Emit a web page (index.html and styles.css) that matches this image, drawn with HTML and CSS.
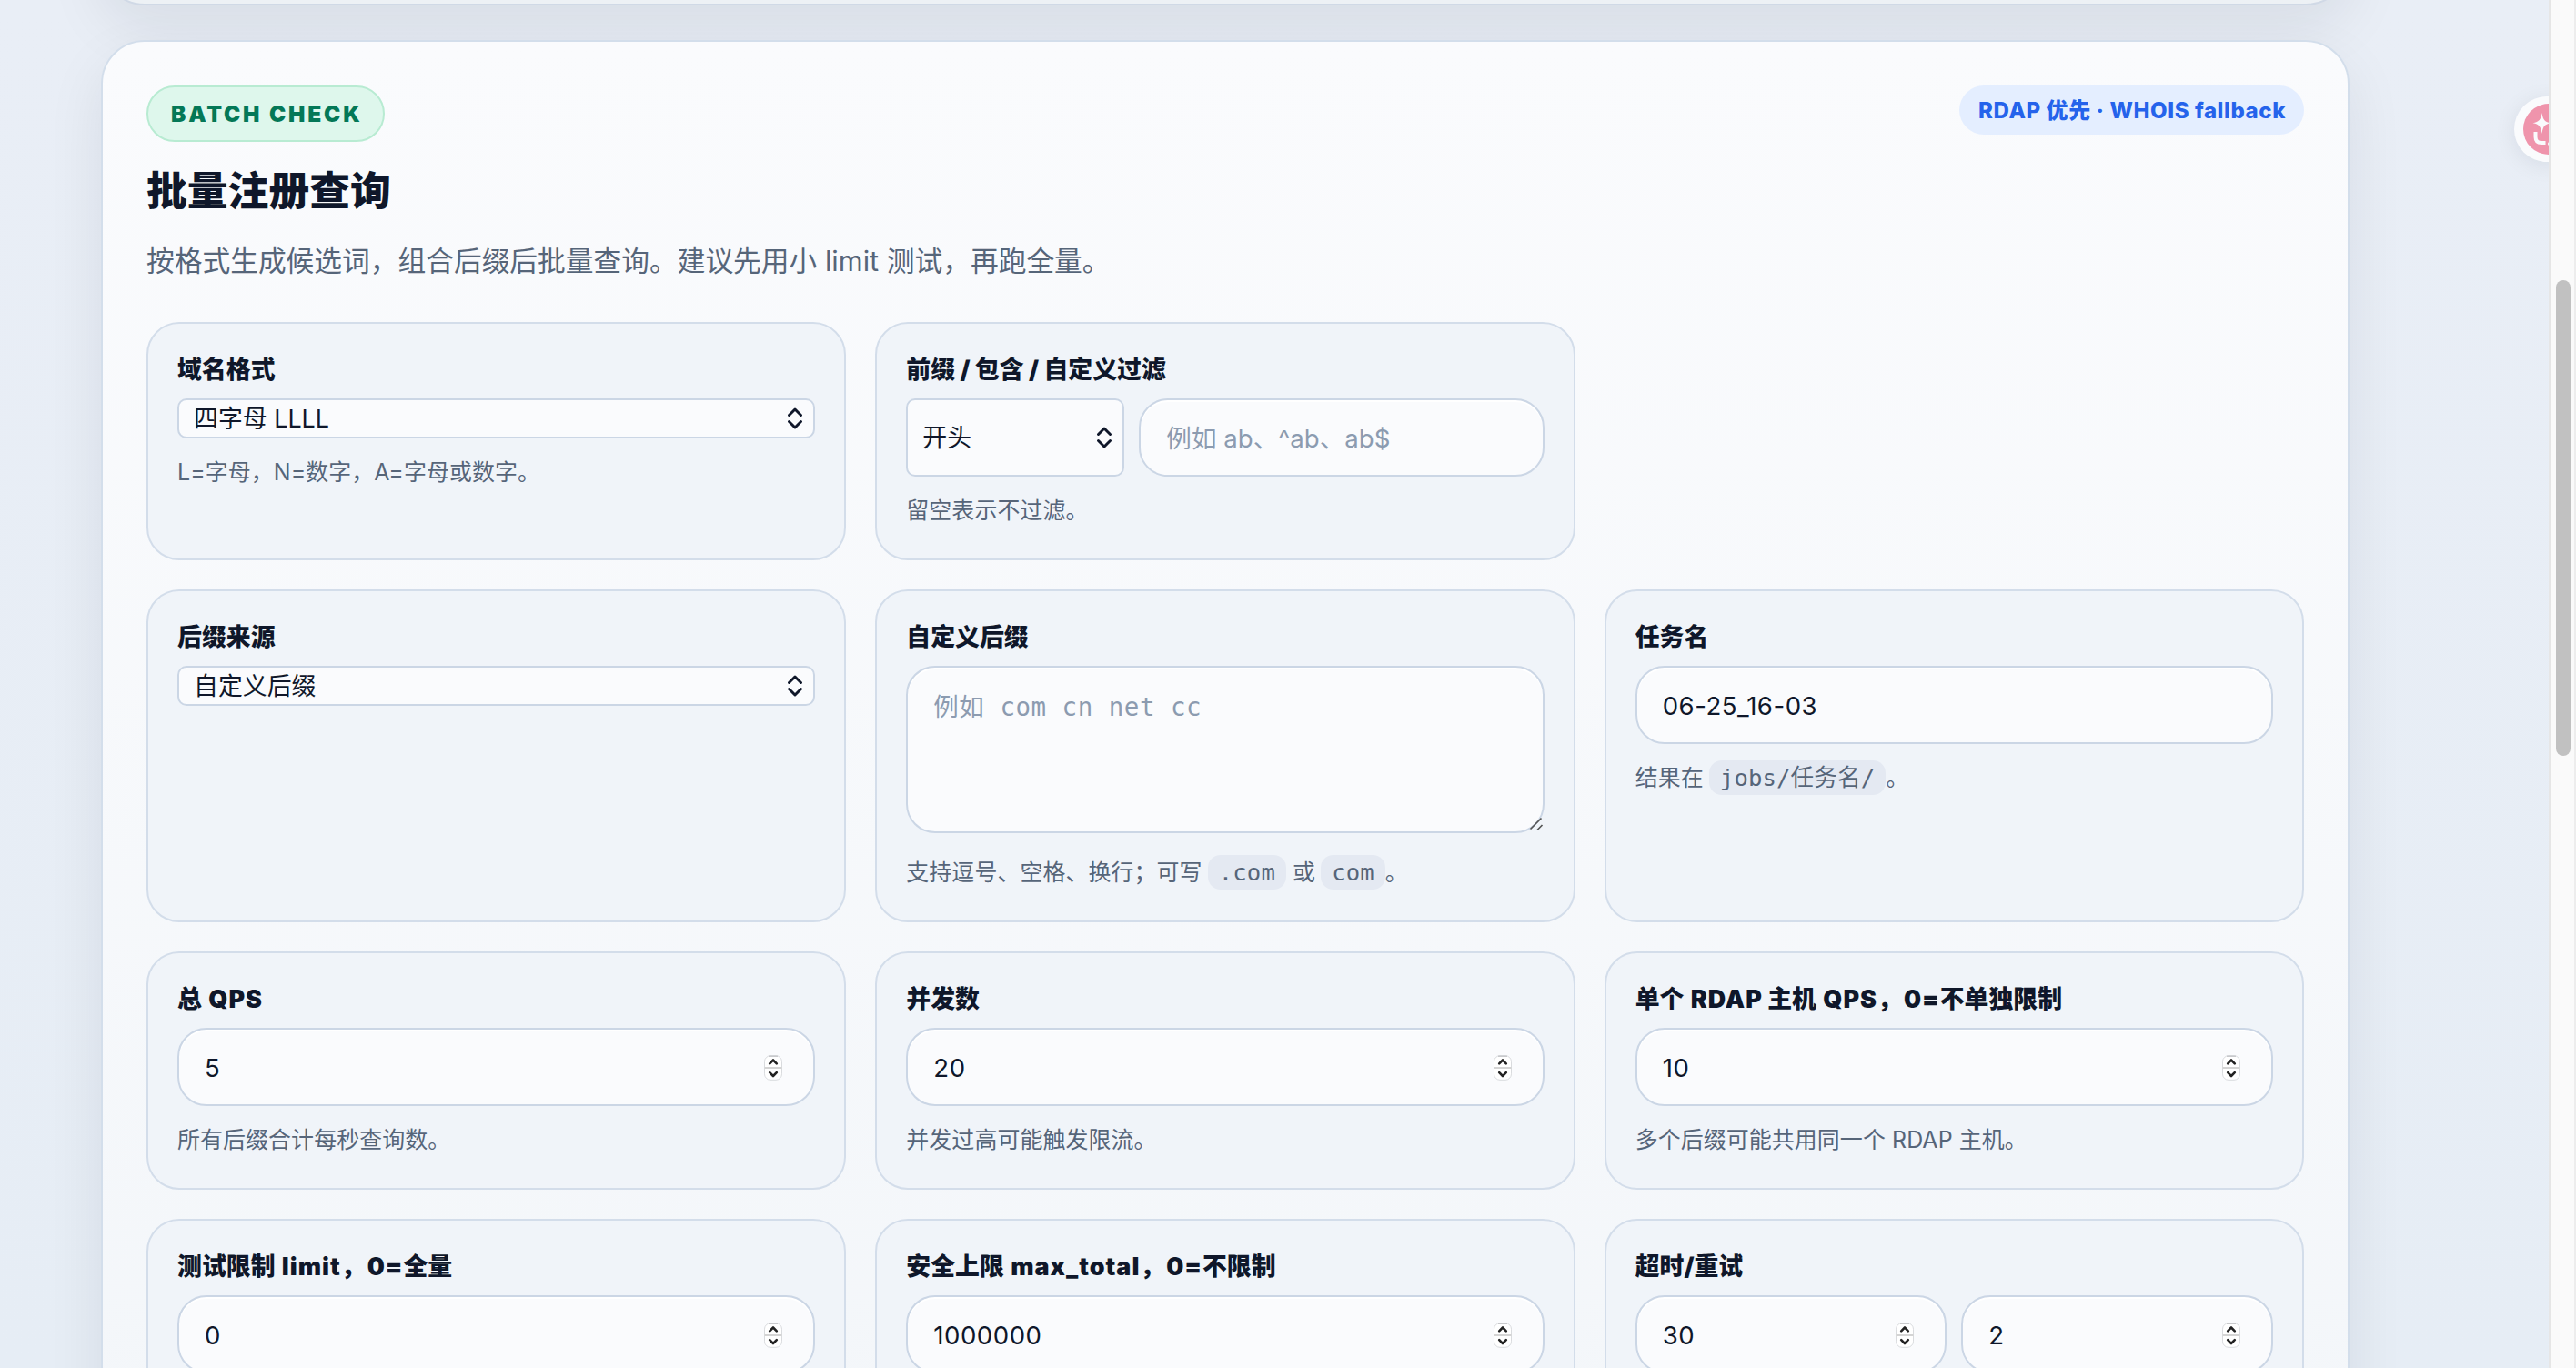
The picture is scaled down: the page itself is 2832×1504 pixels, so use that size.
FILE: index.html
```html
<!DOCTYPE html>
<html lang="zh-CN">
<head>
<meta charset="utf-8">
<title>批量注册查询</title>
<link rel="stylesheet" href="styles.css">
</head>
<body>
<svg class="defs" width="0" height="0" aria-hidden="true">
  <symbol id="chev" viewBox="0 0 18 24"><path d="M2.500 8.500 9 2l6.500 6.500M2.500 15.500 9 22l6.500-6.500" fill="none" stroke="#0f172a" stroke-width="2.900" stroke-linecap="round" stroke-linejoin="round"/></symbol>
  <symbol id="step" viewBox="0 0 20 28"><rect x=".5" y=".7" width="19" height="26.600" rx="6.500" fill="#fff" stroke="#d9dbde"/><path d="M5 1.200h10" stroke="#bdbfc2" stroke-width="1.200"/><path d="M.5 14h19" stroke="#d4d4d4" stroke-width="2"/><path d="M6.200 9.300 10 5.500l3.800 3.800M6.200 19.200 10 23l3.800-3.800" fill="none" stroke="#222" stroke-width="2.600" stroke-linecap="round" stroke-linejoin="round"/></symbol>
</svg>
<div class="viewport">
  <main class="page">
    <section class="panel panel-prev"></section>
    <section class="panel">
      <header class="head">
        <div>
          <span class="eyebrow">BATCH CHECK</span>
          <h2>批量注册查询</h2>
          <p class="lead">按格式生成候选词，组合后缀后批量查询。建议先用小 limit 测试，再跑全量。</p>
        </div>
        <span class="badge">RDAP 优先 · WHOIS fallback</span>
      </header>
      <form class="grid">
        <div class="field">
          <label>域名格式</label>
          <div class="select"><select><option>四字母 LLLL</option></select><svg><use href="#chev"/></svg></div>
          <p class="hint">L=字母，N=数字，A=字母或数字。</p>
        </div>
        <div class="field">
          <label>前缀 / 包含 / 自定义过滤</label>
          <div class="filter">
            <div class="select tall"><select><option>开头</option></select><svg><use href="#chev"/></svg></div>
            <div class="input"><input type="text" placeholder="例如 ab、^ab、ab$"></div>
          </div>
          <p class="hint">留空表示不过滤。</p>
        </div>
        <div class="field row-start">
          <label>后缀来源</label>
          <div class="select"><select><option>自定义后缀</option></select><svg><use href="#chev"/></svg></div>
        </div>
        <div class="field">
          <label>自定义后缀</label>
          <div class="area"><textarea placeholder="例如 com cn net cc"></textarea><svg viewBox="0 0 16 16"><path d="M1.500 13.500 13.500 1.500M9 14.500l5.500-5.500" stroke="#555" stroke-width="1.700" fill="none"/></svg></div>
          <p class="hint">支持逗号、空格、换行；可写 <code>.com</code> 或 <code>com</code>。</p>
        </div>
        <div class="field">
          <label>任务名</label>
          <div class="input"><input type="text" value="06-25_16-03"></div>
          <p class="hint">结果在 <code>jobs/任务名/</code>。</p>
        </div>
        <div class="field">
          <label>总 <b>QPS</b></label>
          <div class="input"><input type="text" value="5"><svg><use href="#step"/></svg></div>
          <p class="hint">所有后缀合计每秒查询数。</p>
        </div>
        <div class="field">
          <label>并发数</label>
          <div class="input"><input type="text" value="20"><svg><use href="#step"/></svg></div>
          <p class="hint">并发过高可能触发限流。</p>
        </div>
        <div class="field">
          <label>单个 <b>RDAP</b> 主机 <b>QPS</b>，<b>0=</b>不单独限制</label>
          <div class="input"><input type="text" value="10"><svg><use href="#step"/></svg></div>
          <p class="hint">多个后缀可能共用同一个 RDAP 主机。</p>
        </div>
        <div class="field">
          <label>测试限制 <b>limit</b>，<b>0=</b>全量</label>
          <div class="input"><input type="text" value="0"><svg><use href="#step"/></svg></div>
        </div>
        <div class="field">
          <label>安全上限 <b>max_total</b>，<b>0=</b>不限制</label>
          <div class="input"><input type="text" value="1000000"><svg><use href="#step"/></svg></div>
        </div>
        <div class="field">
          <label>超时/重试</label>
          <div class="pair">
            <div class="input"><input type="text" value="30"><svg><use href="#step"/></svg></div>
            <div class="input"><input type="text" value="2"><svg><use href="#step"/></svg></div>
          </div>
        </div>
      </form>
    </section>
    <div class="assistant">
      <svg viewBox="0 0 72 72"><circle cx="38" cy="36" r="28" fill="#ef94ac"/><path d="M30.500 18c1.200 7.500 2.800 9.800 9.500 11.300-6.700 1.500-8.300 3.800-9.500 11.700-1.200-7.900-2.800-10.200-10-11.700 7.200-1.500 8.800-3.800 10-11.300z" fill="#fafbfd"/><path d="M23.500 39v5.500q0 6.500 6.500 6.500h4.500" fill="none" stroke="#fafbfd" stroke-width="4"/><circle cx="39" cy="52" r="2" fill="#fafbfd"/></svg>
    </div>
  </main>
  <div class="scrollbar"><div class="thumb"></div></div>
</div>
</body>
</html>
```
FILE: styles.css
```css
* { box-sizing: border-box; }
body {
  margin: 0;
  overflow: hidden;
  font-family: Inter, "Noto Sans CJK SC", sans-serif;
  color: #0f172a;
}
.defs { position: absolute; }
.viewport { display: flex; width: 2832px; height: 1504px; overflow: hidden; }
.page {
  position: relative;
  flex: 1;
  overflow: hidden;
  padding: 0 219px 0 111px;
  background: linear-gradient(180deg, #e9eef6 0%, #e6edf5 100%);
}
.panel {
  height: 2300px;
  padding: 48px;
  border: 2px solid #d3deeb;
  border-radius: 48px;
  background: linear-gradient(180deg, #fafbfd 0%, #f0f4f8 100%);
  box-shadow: 0 24px 64px rgba(15, 23, 42, .08);
}
.panel-prev {
  height: 300px;
  margin: -294px 0 38px;
  border-color: #d0d9e6;
  background: #edf1f5;
}
.head { display: flex; justify-content: space-between; align-items: flex-start; height: 260px; }
.eyebrow {
  display: block;
  width: 262px;
  height: 62px;
  padding-left: 25px;
  border: 2px solid #b8ebd2;
  border-radius: 31px;
  background: #def7ec;
  color: #047857;
  font-size: 24.500px;
  font-weight: 900;
  line-height: 59px;
  letter-spacing: 2.800px;
  white-space: nowrap;
}
h2 { margin: 21px 0 0; font-size: 44.800px; line-height: 66px; font-weight: 800; }
.lead { margin: 19px 0 0; font-size: 30.720px; line-height: 50px; color: #566579; }
.badge {
  height: 54px;
  padding: 0 20px 0 21px;
  border-radius: 27px;
  background: #e4eeff;
  color: #2563eb;
  font-size: 24px;
  font-weight: 800;
  line-height: 55px;
  letter-spacing: .6px;
}
.grid { display: grid; grid-template-columns: repeat(3, 1fr); gap: 32px; }
.field {
  padding: 32px;
  border: 2px solid #d3ddea;
  border-radius: 36px;
  background: #f0f4f9;
}
.row-start { grid-column-start: 1; }
label { display: block; height: 50px; font-size: 26.880px; line-height: 37px; font-weight: 900; white-space: nowrap; }
label b { margin-left: 2px; font-weight: 900; letter-spacing: 1px; }
.hint { margin: 16px 0 0; height: 42px; font-size: 24.960px; line-height: 43px; letter-spacing: .07px; color: #566579; white-space: nowrap; }
input, select, textarea {
  display: block;
  width: 100%;
  margin: 0;
  border: 2px solid #cbd6e5;
  background: #fafbfd;
  color: #0f172a;
  outline: none;
  appearance: none;
}
input { height: 86px; padding: 2px 28px 0; border-radius: 32px; font: 27.600px Inter, "Noto Sans CJK SC", sans-serif; letter-spacing: .5px; box-shadow: inset 0 2px 1px #fff; }
input::placeholder { letter-spacing: 0; }
textarea {
  height: 184px;
  padding: 22px 28px;
  border-radius: 32px;
  resize: none;
  font: 27.500px/42px "DejaVu Sans Mono", "Noto Sans CJK SC", monospace;
  letter-spacing: .5px;
  box-shadow: inset 0 2px 1px #fff;
}
::placeholder { color: #8c9bb0; opacity: 1; }
select { height: 44px; padding: 0 16px; border-radius: 10px; font: 26.880px Inter, "Noto Sans CJK SC", sans-serif; }
.tall select { height: 86px; }
.select, .input, .area { position: relative; }
.select svg { position: absolute; right: 13px; top: calc(50% - 12px); width: 18px; height: 24px; }
.input svg { position: absolute; right: 36px; top: calc(50% - 13px); width: 20px; height: 28px; }
.area { padding-bottom: 6px; }
.area svg { position: absolute; right: 1px; bottom: 8px; width: 16px; height: 16px; }
.filter { display: grid; grid-template-columns: 240px 1fr; gap: 16px; }
.pair { display: grid; grid-template-columns: 1fr 1fr; gap: 16px; }
code {
  display: inline-block;
  height: 38px;
  margin-left: -1px;
  padding: 0 12px;
  border-radius: 14px;
  background: #e4e9f2;
  font: 25.600px/38px "DejaVu Sans Mono", "Noto Sans CJK SC", monospace;
  letter-spacing: .15px;
}
.assistant {
  position: absolute;
  left: 2764px;
  top: 106px;
  width: 72px;
  height: 72px;
  border-radius: 50%;
  background: #fafbfd;
  box-shadow: 0 4px 24px rgba(15, 23, 42, .08);
}
.assistant svg { display: block; width: 72px; height: 72px; }
.scrollbar {
  width: 30px;
  padding: 308px 4px 0 6px;
  border-left: 2px solid #e6e6e6;
  border-right: 2px solid #ededed;
  background: #fafafa;
}
.thumb { width: 16px; height: 523px; border-radius: 8px; background: #c1c1c1; }
```
